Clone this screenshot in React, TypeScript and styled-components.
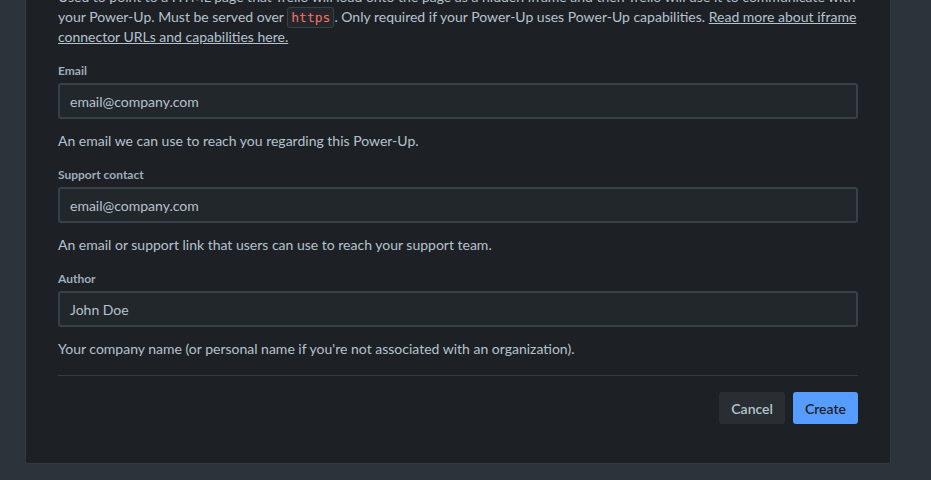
import React from "react";
import styled, { createGlobalStyle } from "styled-components";

const GlobalStyle = createGlobalStyle`
  html, body {
    margin: 0;
    padding: 0;
    background: #2c333a;
    overflow: hidden;
  }
  body {
    font-family: Lato, "Noto Sans", sans-serif;
    -webkit-font-smoothing: antialiased;
  }
`;

const Page = styled.div`
  padding: 0 0 16px 25px;
`;

const Panel = styled.section`
  box-sizing: border-box;
  width: 866px;
  margin-top: -46px;
  padding: 32px 32px 39px;
  background: #1d2125;
  border: 1px solid #333a41;
  border-radius: 3px;
  display: flex;
  flex-direction: column;
  gap: 16px;
`;

const Description = styled.p`
  margin: 0;
  font-size: 14px;
  line-height: 20px;
  color: #b6c2cf;
`;

const Code = styled.code`
  font-family: "DejaVu Sans Mono", "Liberation Mono", monospace;
  font-size: 13px;
  line-height: 1;
  color: #f87168;
  background: #22272b;
  border: 1px solid #38414a;
  border-radius: 3px;
  padding: 2px 3px;
`;

const Link = styled.a`
  color: #b6c2cf;
  text-decoration: underline;
`;

const Field = styled.div`
  display: flex;
  flex-direction: column;
`;

const Label = styled.label`
  font-size: 12px;
  line-height: 16px;
  font-weight: 700;
  color: #9fadbc;
  margin-bottom: 4px;
`;

const Input = styled.input`
  box-sizing: border-box;
  height: 36px;
  width: 100%;
  padding: 0 10px;
  background: #22272b;
  border: 2px solid #38414a;
  border-radius: 3px;
  font-family: inherit;
  font-size: 14px;
  color: #b6c2cf;
  outline: none;
`;

const Help = styled.div`
  margin-top: 12px;
  font-size: 14px;
  line-height: 20px;
  color: #b6c2cf;
`;

const Divider = styled.hr`
  margin: 0;
  border: none;
  height: 1px;
  background: #343b42;
`;

const Actions = styled.div`
  display: flex;
  justify-content: flex-end;
  gap: 8px;
`;

const Button = styled.button<{ $primary?: boolean }>`
  height: 32px;
  padding: 0 12px;
  border: none;
  border-radius: 3px;
  font-family: inherit;
  font-size: 14px;
  font-weight: 600;
  cursor: pointer;
  background: ${(p) => (p.$primary ? "#579dff" : "#282e33")};
  color: ${(p) => (p.$primary ? "#1d2125" : "#b6c2cf")};
`;

const fields = [
  {
    label: "Email",
    value: "email@company.com",
    help: "An email we can use to reach you regarding this Power-Up.",
  },
  {
    label: "Support contact",
    value: "email@company.com",
    help: "An email or support link that users can use to reach your support team.",
  },
  {
    label: "Author",
    value: "John Doe",
    help: "Your company name (or personal name if you're not associated with an organization).",
  },
];

export default function App() {
  return (
    <>
      <GlobalStyle />
      <Page>
        <Panel>
          <Description>
            Used to point to a HTML page that Trello will load onto the page as a hidden iframe and
            then Trello will use it to communicate with your Power-Up. Must be served over{" "}
            <Code>https</Code>. Only required if your Power-Up uses Power-Up capabilities.{" "}
            <Link href="#">Read more about iframe connector URLs and capabilities here.</Link>
          </Description>
          {fields.map((f) => (
            <Field key={f.label}>
              <Label>{f.label}</Label>
              <Input defaultValue={f.value} />
              <Help>{f.help}</Help>
            </Field>
          ))}
          <Divider />
          <Actions>
            <Button>Cancel</Button>
            <Button $primary>Create</Button>
          </Actions>
        </Panel>
      </Page>
    </>
  );
}
